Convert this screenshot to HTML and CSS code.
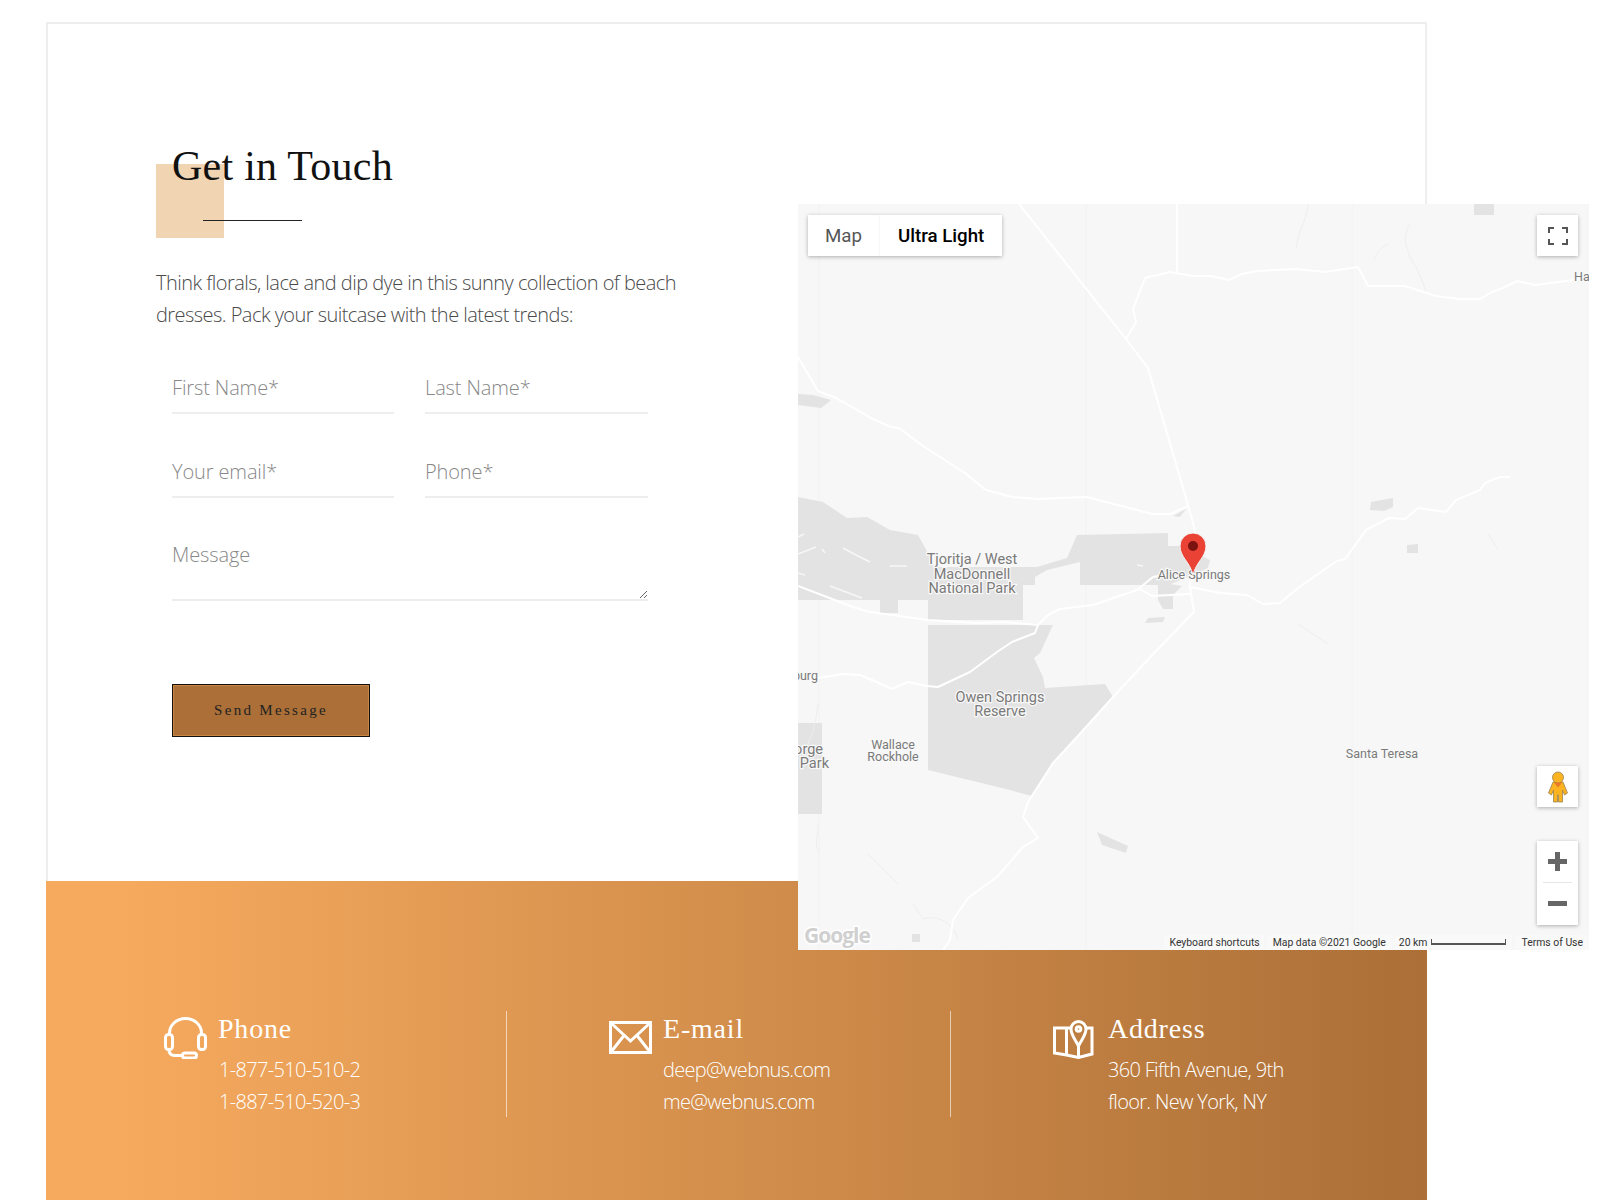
FILE: index.html
```html
<!DOCTYPE html>
<html>
<head>
<meta charset="utf-8"/>
<title>Get in Touch</title>
<link rel="stylesheet" href="styles.css">
</head>
<body>
<div class="page">

	<div class="contact">
		<h1 class="titre">Get in Touch</h1>
		<p class="intro">Think florals, lace and dip dye in this sunny collection of beach dresses. Pack your suitcase with the latest trends:</p>
		<form class="formulaire">
			<input type="text" placeholder="First Name*">
			<input type="text" placeholder="Last Name*">
			<input type="text" placeholder="Your email*">
			<input type="text" placeholder="Phone*">
			<textarea placeholder="Message"></textarea>
			<button type="button" class="envoyer">Send Message</button>
		</form>
	</div>

	<!-- Bandeau du bas -->
	<div class="infos">
		<div class="info">
			<svg class="icone" width="43" height="42" viewBox="0 0 43 42">
				<path d="M5.5 17V16A16 14.5 0 0 1 37.5 16V17"/>
				<rect x="1.5" y="17.5" width="7" height="15" rx="3"/>
				<rect x="34.5" y="17.5" width="7" height="15" rx="3"/>
				<path d="M5 33Q5 38.5 11 38.5H18"/>
				<rect x="18.5" y="36" width="14" height="5" rx="2.5"/>
			</svg>
			<div>
				<h3>Phone</h3>
				<p>1-877-510-510-2</p>
				<p>1-887-510-520-3</p>
			</div>
		</div>
		<div class="info">
			<svg class="icone" width="43" height="33" viewBox="0 0 43 33">
				<rect x="1.5" y="1.5" width="40" height="30"/>
				<path d="M2 2L21.5 20L41 2"/>
				<path d="M2 31L15 14.5M41 31L28 14.5"/>
			</svg>
			<div>
				<h3>E-mail</h3>
				<p>deep@webnus.com</p>
				<p>me@webnus.com</p>
			</div>
		</div>
		<div class="info">
			<svg class="icone" width="41" height="40" viewBox="0 0 41 40">
				<path d="M17 9H1.5V34L13.5 36L25.5 38.5L39 35V9H33.5"/>
				<path d="M13.5 9V36"/>
				<path d="M25.5 27C22 20 18 16 18 10A7.5 7.5 0 0 1 33 10C33 16 29 20 25.5 27V38"/>
				<circle cx="25.5" cy="10" r="2.3"/>
			</svg>
			<div>
				<h3>Address</h3>
				<p>360 Fifth Avenue, 9th</p>
				<p>floor. New York, NY</p>
			</div>
		</div>
	</div>

	<!-- La carte passe par-dessus les deux blocs -->
	<div class="carte">
		<svg class="fond" width="791" height="746" viewBox="0 0 791 746">
			<g class="meridien">
				<path d="M21 0V746M288 0V746M554 0V746"/>
			</g>
			<g class="zone">
				<path d="M0 293L25 298L49 314L69 313L92 326L120 331L130 349L136 363L225 363L239 363L269 354L279 331L370 329V342H384L412 356L410 364L398 370L370 381H282V358L249 366L237 373V381H225V416H130V396H100V409H82V396H0Z"/>
				<path d="M130 421H255L242 449L236 454L245 473L247 484L307 480L315 493L279 533L255 559L234 592L212 586L130 566Z"/>
				<path d="M360 378L384 382L375 391V405H365L360 396Z"/>
				<path d="M347 419L350 414L367 413L365 418Z"/>
				<path d="M0 519H24V610H0Z"/>
				<path d="M299 628L330 642L328 649L304 641Z"/>
				<path d="M114 730H122V738H114Z"/>
				<path d="M0 190L15 191L33 196L23 204L0 201Z"/>
				<path d="M676 0H696V11H676Z"/>
				<path d="M573 298L595 294V303L586 307L572 306Z"/>
				<path d="M609 341L620 340V349H609Z"/>
				<path d="M375 312L388 305L382 313Z"/>
			</g>
			<g class="veine">
				<path d="M0 350L18 343M24 345L27 349M45 344L60 352L72 358M32 382L64 394M92 362H109M0 369L7 371M0 333L6 330M339 361L345 362"/>
			</g>
			<g class="ruisseau">
				<path d="M510 0C508 20 502 20 498 44M612 20C606 30 606 38 610 46C612 60 622 62 628 90M590 40C580 45 578 52 576 56M690 330L700 345M500 420L530 440M20 500C18 520 14 530 10 540M70 650L90 670L100 680M115 700L125 715C140 710 155 720 160 735M20 620C20 635 16 640 21 648"/>
			</g>
			<g class="route">
				<path d="M221 0L328 135L350 164L390 301L397 326L392 383L396 408L359 446L315 493L279 533L255 559L230 598L225 613L240 634L225 643L199 673L170 694L155 716L152 736L145 746"/>
				<path d="M379 0V68"/>
				<path d="M328 135L338 118L335 105L347 74L372 68L395 72H413L431 76L444 70L459 67L498 65L527 68L560 63L570 82H607L638 92L661 95H682L694 88L705 84L719 77L737 81L775 76L792 72"/>
				<path d="M0 153L20 187L38 194L75 215L93 223L101 224L125 242L167 269L188 286L214 293L240 295L289 293L354 310H372L390 302"/>
				<path d="M392 383L422 389L449 391L465 400L482 399L500 384L539 357L547 355L568 326L591 314L607 315L620 304L648 308L658 296L682 286L687 279L702 273H712"/>
				<path d="M0 382L55 403L72 408L130 416L179 419L205 418L240 421L250 411L262 405L295 401L339 386L355 373L370 370"/>
				<path d="M240 421L237 429L214 438L199 448L172 468L140 483L129 482L110 478L94 485L74 476L62 471L45 470L20 474H0"/>
				<path d="M342 385L354 392L392 390"/>
			</g>
			<g class="lieu">
				<text x="174" y="360">Tjoritja / West</text>
				<text x="174" y="375">MacDonnell</text>
				<text x="174" y="389">National Park</text>
				<text x="202" y="498">Owen Springs</text>
				<text x="202" y="512">Reserve</text>
				<text x="25" y="550" class="droite">orge</text>
				<text x="31" y="564" class="droite">Park</text>
			</g>
			<g class="lieu petit">
				<text x="95" y="545">Wallace</text>
				<text x="95" y="557">Rockhole</text>
				<text x="396" y="375">Alice Springs</text>
				<text x="584" y="554">Santa Teresa</text>
				<text x="20" y="476" class="droite">burg</text>
				<text x="776" y="77" class="gauche">Ha</text>
			</g>
			<text class="logo" x="6" y="739">Google</text>
			<!-- marqueur -->
			<path d="M395 371C392 358 382 353 382 342A13 13 0 0 1 408 342C408 353 398 358 395 371Z" fill="#ea4335" stroke="#f4f4f4" stroke-width="1"/>
			<circle cx="395" cy="342" r="5" fill="#7b1310"/>
		</svg>

		<div class="type-carte">
			<span class="type">Map</span>
			<span class="type actif">Ultra Light</span>
		</div>

		<div class="bouton plein-ecran">
			<svg width="20" height="18" viewBox="0 0 20 18">
				<path d="M1 6V1H6M14 1H19V6M1 12V17H6M14 17H19V12"/>
			</svg>
		</div>

		<div class="bouton pegman">
			<svg width="20" height="32" viewBox="0 0 20 32">
				<path d="M5 11L0.5 22L3.5 24L5.5 19V31H9.5V24H10.5V31H14.5V19L16.5 24L19.5 22L15 11Z" fill="#fbb321" stroke="#9a8350" stroke-width=".8"/>
				<circle cx="10" cy="6.5" r="5.5" fill="#fbb321" stroke="#9a8350" stroke-width=".8"/>
				<path d="M6 11.5L10 16.5L14 11.5Z" fill="#e8792b"/>
			</svg>
		</div>

		<div class="zoom">
			<span class="plus"></span>
			<span class="moins"></span>
		</div>

		<div class="mentions">
			<span class="raccourcis">Keyboard shortcuts</span>
			<span>Map data ©2021 Google</span>
			<span class="echelle">20 km <i></i></span>
			<span>Terms of Use</span>
		</div>
	</div>

</div>
</body>
</html>
```

FILE: styles.css
```css
html {
overflow: hidden;
}
body {
margin: 0;
padding: 22px 0 0 46px;
background-color: #fff;
font-family: "Open Sans", sans-serif;
}
.page {
position: relative;
width: 1381px;
}

/* Partie formulaire */
.contact {
border: 2px solid #eee;
border-bottom: 0;
padding: 112px 0 144px 108px;
}
.titre {
position: relative;
height: 102px;
margin: 0;
padding-left: 16px;
font-family: "Liberation Serif", serif;
font-size: 42px;
font-weight: 400;
line-height: 60px;
letter-spacing: .25px;
color: #111;
}
.titre:before {
content: "";
position: absolute;
z-index: -1;
left: 0;
top: 28px;
width: 68px;
height: 74px;
background-color: #f1d4b2;
}
.titre:after {
content: "";
position: absolute;
left: 47px;
top: 84px;
width: 99px;
height: 1px;
background-color: #222;
}
.intro {
width: 540px;
margin: 29px 0;
font-size: 20px;
font-weight: 300;
line-height: 32px;
letter-spacing: -.54px;
color: #4a4a4a;
}
.formulaire {
display: grid;
grid-template-columns: 222px 223px;
column-gap: 31px;
row-gap: 30px;
margin-left: 16px;
width: 476px;
}
.formulaire input, .formulaire textarea {
display: block;
box-sizing: border-box;
margin: 0;
height: 54px;
padding: 2px 0 0 0;
border: 0;
border-bottom: 2px solid #eee;
outline: 0;
background: transparent;
font-family: "Open Sans", sans-serif;
font-size: 20px;
font-weight: 300;
letter-spacing: -.12px;
color: #444;
}
.formulaire textarea {
grid-column: 1 / 3;
width: 100%;
height: 73px;
padding-top: 13px;
line-height: 28px;
}
.formulaire ::placeholder {
color: #888;
opacity: 1;
}
.envoyer {
grid-column: 1;
justify-self: start;
width: 198px;
height: 53px;
margin-top: 53px;
border: 1px solid #111;
box-shadow: inset 0 0 0 1px #c98642;
background-color: #ab6f37;
font-family: "Liberation Serif", serif;
font-size: 15px;
letter-spacing: 2.3px;
color: #222;
}

/* Bandeau orange */
.infos {
display: grid;
grid-template-columns: 446px 444px 445px;
box-sizing: border-box;
height: 319px;
padding: 130px 0 0 15px;
background: linear-gradient(to right, #f6aa5e 5%, #ab6f37 100%);
color: #fff;
}
.info {
display: flex;
gap: 11px;
box-sizing: border-box;
height: 106px;
padding-left: 103px;
border-right: 1px solid rgba(255,255,255,.6);
}
.info:nth-child(2) {
padding-left: 102px;
}
.info:nth-child(3) {
padding-left: 102px;
gap: 14px;
border-right: 0;
}
.info h3 {
margin: 0 0 7px 0;
font-family: "Liberation Serif", serif;
font-size: 28px;
font-weight: 400;
line-height: 36px;
letter-spacing: .8px;
}
.info p {
margin: 0;
font-size: 20px;
font-weight: 300;
line-height: 32px;
letter-spacing: -.68px;
}
.info:first-child p {
padding-left: 1px;
}
.icone {
flex-shrink: 0;
margin-top: 6px;
fill: none;
stroke: #fff;
stroke-width: 3;
}
.info:nth-child(2) .icone {
margin-top: 10px;
}
.info:nth-child(3) .icone {
margin-top: 8px;
}

/* Carte */
.carte {
position: absolute;
left: 752px;
top: 182px;
width: 791px;
height: 746px;
overflow: hidden;
background-color: #f7f7f7;
font-family: Roboto, sans-serif;
}
.fond {
display: block;
}
.meridien path {
fill: none;
stroke: #f2f2f2;
stroke-width: 1;
}
.zone path {
fill: #e3e3e3;
}
.veine path {
fill: none;
stroke: #f7f7f7;
stroke-width: 1.5;
}
.ruisseau path {
fill: none;
stroke: #eeeeee;
stroke-width: 1;
}
.route path {
fill: none;
stroke: #fff;
stroke-width: 2;
stroke-linejoin: round;
}
.lieu text {
font-size: 14.5px;
text-anchor: middle;
fill: #7a7a7a;
stroke: #f8f8f8;
stroke-width: 2.5px;
paint-order: stroke;
}
.lieu.petit text {
font-size: 12.5px;
}
.lieu .droite {
text-anchor: end;
}
.lieu .gauche {
text-anchor: start;
}
.logo {
font-family: "Open Sans", sans-serif;
font-size: 21px;
font-weight: 700;
letter-spacing: -1px;
fill: #d0d0d0;
stroke: #fff;
stroke-width: 3px;
paint-order: stroke;
}
.type-carte {
position: absolute;
left: 10px;
top: 11px;
display: flex;
height: 41px;
box-shadow: 0 1px 4px rgba(0,0,0,.3);
}
.type {
display: flex;
align-items: center;
padding: 0 17px;
background-color: #fff;
font-size: 18.7px;
color: #565656;
}
.type.actif {
margin-left: 1px;
padding: 0 18px;
font-weight: 500;
color: #000;
}
.bouton {
position: absolute;
left: 739px;
width: 41px;
height: 41px;
display: flex;
align-items: center;
justify-content: center;
background-color: #fff;
box-shadow: 0 1px 4px rgba(0,0,0,.3);
}
.plein-ecran {
top: 11px;
}
.plein-ecran path {
fill: none;
stroke: #555;
stroke-width: 2;
}
.pegman {
top: 562px;
}
.zoom {
position: absolute;
left: 739px;
top: 637px;
width: 41px;
height: 84px;
background-color: #fff;
box-shadow: 0 1px 4px rgba(0,0,0,.3);
}
.zoom:before {
content: "";
position: absolute;
left: 6px;
right: 6px;
top: 41px;
height: 1px;
background-color: #e6e6e6;
}
.plus, .plus:after, .moins {
position: absolute;
background-color: #666;
}
.plus {
left: 11px;
top: 18px;
width: 19px;
height: 5px;
}
.plus:after {
content: "";
left: 7px;
top: -7px;
width: 5px;
height: 19px;
}
.moins {
left: 11px;
top: 60px;
width: 19px;
height: 5px;
}
.mentions {
position: absolute;
right: 0;
bottom: 0;
display: flex;
gap: 1px;
height: 15px;
font-size: 10.4px;
line-height: 15px;
color: #333;
}
.mentions span {
padding: 0 6px;
background-color: rgba(255,255,255,.3);
}
.mentions span + span {
margin-left: 2px;
}
.mentions .raccourcis {
padding-right: 4px;
}
.mentions .echelle {
display: flex;
gap: 4px;
padding-left: 4px;
}
.echelle i {
display: block;
box-sizing: border-box;
width: 75px;
height: 6px;
margin-top: 4px;
border: 1px solid #555;
border-top: 0;
border-bottom-width: 2px;
}
```
